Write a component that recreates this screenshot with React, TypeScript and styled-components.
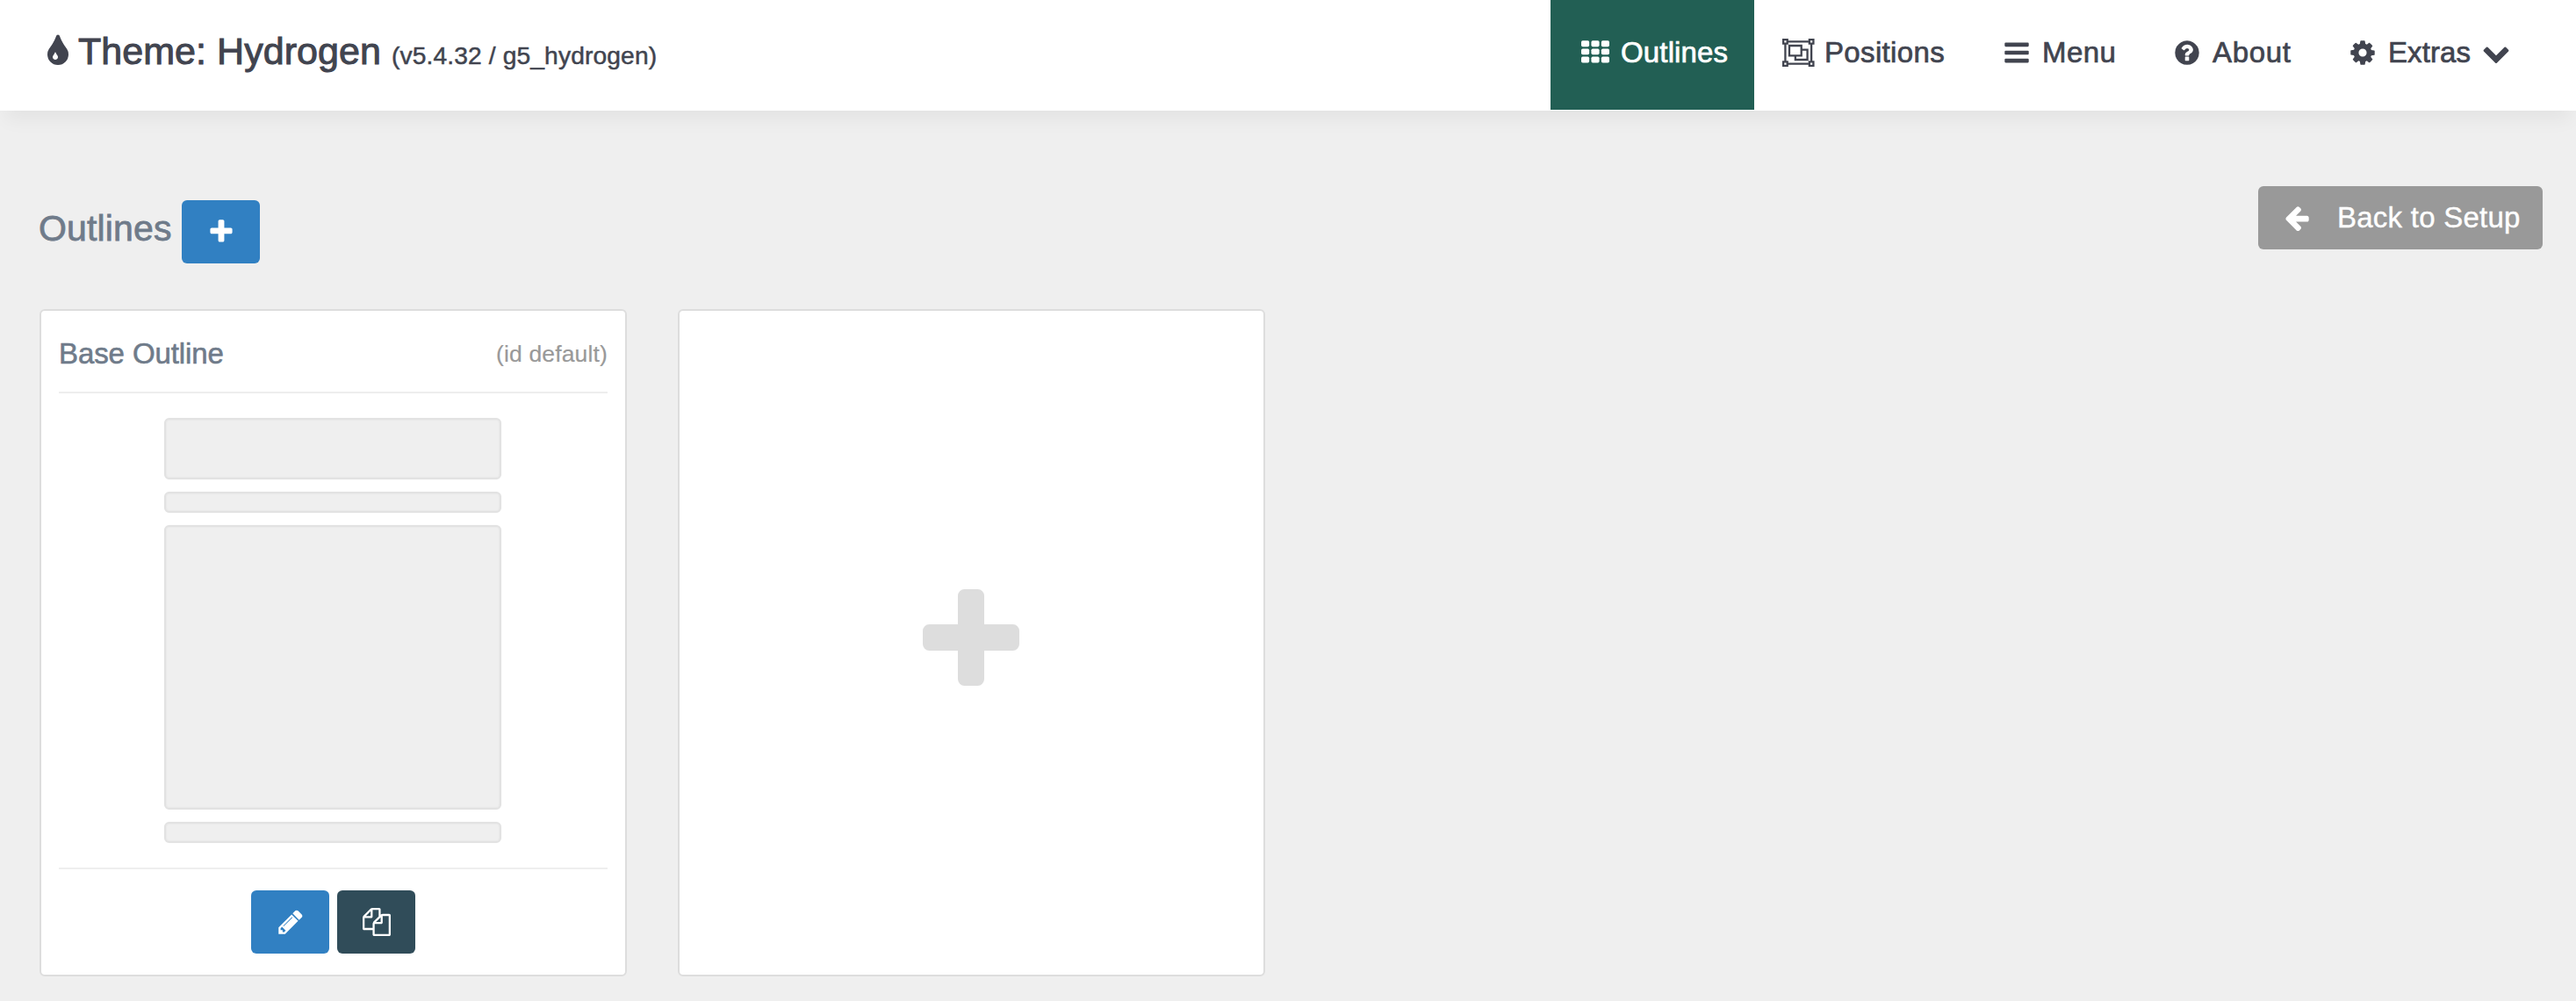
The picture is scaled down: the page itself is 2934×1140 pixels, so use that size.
import React from 'react';
import styled, { createGlobalStyle } from 'styled-components';

const GlobalStyle = createGlobalStyle`
  *, *::before, *::after { box-sizing: border-box; }
  body {
    margin: 0;
    background: #efefef;
    color: #41444f;
    font-family: "Liberation Sans", Arial, sans-serif;
  }
  h1, h2, h3 { margin: 0; font-weight: 400; }
`;

/* ---------- icons ---------- */

const Glyph = styled.svg<{ $size: number; $width?: number }>`
  display: block;
  flex: none;
  height: ${(p) => p.$size}px;
  width: ${(p) => p.$width ?? p.$size}px;
  fill: currentColor;
`;

const PATHS = {
  tint: 'M896 1152q0-36-20-69-1-1-15.5-22.5t-25.5-38-25-44-21-50.5q-4-16-21-16t-21 16q-7 23-21 50.5t-25 44-25.5 38-15.5 22.5q-20 33-20 69 0 53 37.5 90.5t90.5 37.5 90.5-37.5 37.5-90.5zm512-128q0 212-150 362t-362 150-362-150-150-362q0-145 81-275 6-9 62.5-90.5t101-151 99.5-178 83-201.5q9-30 34-47t51-17 51.5 17 33.5 47q28 93 83 201.5t99.5 178 101 151 62.5 90.5q81 127 81 275z',
  group:
    'M2048 384h-128v1024h128v384h-384v-128h-1280v128h-384v-384h128v-1024h-128v-384h384v128h1280v-128h384v384zm-256-256v128h128v-128h-128zm-1664 0v128h128v-128h-128zm128 1536v-128h-128v128h128zm1408-128v-128h128v-1024h-128v-128h-1280v128h-128v1024h128v128h1280zm256 128v-128h-128v128h128zM1280 640h384v768h-896v-256h-384v-768h896v256zm-768 384h640v-512h-640v512zm1024 256v-512h-256v384h-384v128h640z',
  question:
    'M1024 1376v-192q0-14-9-23t-23-9h-192q-14 0-23 9t-9 23v192q0 14 9 23t23 9h192q14 0 23-9t9-23zm256-672q0-88-55.5-163t-138.5-116-170-41q-243 0-371 213-15 24 8 42l132 100q7 6 19 6 16 0 25-12 53-68 86-92 34-24 86-24 48 0 85.5 26t37.5 59q0 38-20 61t-68 45q-63 28-115.5 86.5t-52.5 125.5v36q0 14 9 23t23 9h192q14 0 23-9t9-23q0-19 21.5-49.5t54.5-49.5q32-18 49-28.5t46-35 44.5-48 28-60.5 12.5-81zm384 192q0 209-103 385.5t-279.5 279.5-385.5 103-385.5-103-279.5-279.5-103-385.5 103-385.5 279.5-279.5 385.5-103 385.5 103 279.5 279.5 103 385.5z',
  cog: 'M1152 896q0-106-75-181t-181-75-181 75-75 181 75 181 181 75 181-75 75-181zm512-109v222q0 12-8 23t-20 13l-185 28q-19 54-39 91 35 50 107 138 10 12 10 25t-9 23q-27 37-99 108t-94 71q-12 0-26-9l-138-108q-44 23-91 38-16 136-29 186-7 28-36 28h-222q-14 0-24.5-8.5t-11.5-21.5l-28-184q-49-16-90-37l-141 107q-10 9-25 9-14 0-25-11-126-114-165-168-7-10-7-23 0-12 8-23 15-21 51-66.5t54-70.5q-27-50-41-99l-183-27q-13-2-21-12.5t-8-23.5v-222q0-12 8-23t19-13l186-28q14-46 39-92-40-57-107-138-10-12-10-24 0-10 9-23 26-36 98.5-107.5t94.5-71.5q13 0 26 10l138 107q44-23 91-38 16-136 29-186 7-28 36-28h222q14 0 24.5 8.5t11.5 21.5l28 184q49 16 90 37l142-107q9-9 24-9 13 0 25 10 129 119 165 170 7 8 7 22 0 12-8 23-15 21-51 66.5t-54 70.5q26 50 41 98l183 28q13 2 21 12.5t8 23.5z',
  chevron:
    'M1683 808l-742 741q-19 19-45 19t-45-19l-742-741q-19-19-19-45.5t19-45.5l166-165q19-19 45-19t45 19l531 531 531-531q19-19 45-19t45 19l166 165q19 19 19 45.5t-19 45.5z',
  plus: 'M1600 736v192q0 40-28 68t-68 28h-416v416q0 40-28 68t-68 28h-192q-40 0-68-28t-28-68v-416h-416q-40 0-68-28t-28-68v-192q0-40 28-68t68-28h416v-416q0-40 28-68t68-28h192q40 0 68 28t28 68v416h416q40 0 68 28t28 68z',
  arrow:
    'M1664 896v128q0 53-32.5 90.5t-84.5 37.5h-704l293 294q38 36 38 90t-38 90l-75 76q-37 37-90 37-52 0-91-37l-651-652q-37-37-37-90 0-52 37-91l651-650q38-38 91-38 52 0 90 38l75 74q38 38 38 91t-38 91l-293 293h704q52 0 84.5 37.5t32.5 90.5z',
  pencil:
    'M491 1536l91-91-235-235-91 91v107h128v128h107zm523-928q0-22-22-22-10 0-17 7l-542 542q-7 7-7 17 0 22 22 22 10 0 17-7l542-542q7-7 7-17zm-54-192l416 416-832 832h-416v-416zm683 96q0 53-37 90l-166 166-416-416 166-165q36-38 90-38 53 0 91 38l235 234q37 39 37 91z',
  files:
    'M1696 384q40 0 68 28t28 68v1216q0 40-28 68t-68 28h-960q-40 0-68-28t-28-68v-288h-544q-40 0-68-28t-28-68v-672q0-40 20-88t48-76l408-408q28-28 76-48t88-20h416q40 0 68 28t28 68v328q68-40 128-40h416zm-544 213l-299 299h299v-299zm-640-384l-299 299h299v-299zm196 647l316-316v-416h-384v416q0 40-28 68t-68 28h-416v640h512v-256q0-40 20-88t48-76zm956 804v-1152h-384v416q0 40-28 68t-68 28h-416v640h896z',
};

type IconName = keyof typeof PATHS;

const Icon = ({ name, size = 32 }: { name: IconName; size?: number }) => {
  const units = name === 'group' ? 2048 : 1792;
  return (
    <Glyph $size={size} $width={(size * units) / 1792} viewBox={`0 0 ${units} 1792`} fillRule="evenodd" aria-hidden>
      <path d={PATHS[name]} />
    </Glyph>
  );
};

const GridIcon = () => (
  <Glyph $size={32} viewBox="0 0 1792 1792" aria-hidden>
    {[128, 640, 1152].map((y) =>
      [0, 640, 1280].map((x) => <rect key={`${x}-${y}`} x={x} y={y} width="512" height="384" rx="96" />),
    )}
  </Glyph>
);

const BarsIcon = () => (
  <Glyph $size={32} viewBox="0 0 1792 1792" aria-hidden>
    {[256, 768, 1280].map((y) => (
      <rect key={y} x="128" y={y} width="1536" height="256" rx="64" />
    ))}
  </Glyph>
);

/* ---------- header ---------- */

const Header = styled.header`
  display: flex;
  justify-content: space-between;
  height: 126px;
  background: #fff;
  box-shadow: 0 16px 20px -6px rgba(0, 0, 0, 0.05);
`;

const Brand = styled.div`
  display: flex;
  align-items: center;
  gap: 2px;
  padding: 0 0 8px 45px;
`;

const Title = styled.h1`
  padding-top: 3px;
  font-size: 43px;
  line-height: 50px;
  letter-spacing: 0.05px;
  white-space: nowrap;
  -webkit-text-stroke: 1px currentColor;
`;

const Version = styled.small`
  margin-left: 12px;
  font-size: 28.2px;
  letter-spacing: 0.13px;
  -webkit-text-stroke: 0.5px currentColor;
`;

const Nav = styled.nav`
  display: flex;
  height: 125px;
`;

const Tab = styled.a<{ $width: number; $active?: boolean }>`
  display: flex;
  align-items: center;
  width: ${(p) => p.$width}px;
  padding: 0 0 6px 30px;
  color: ${(p) => (p.$active ? '#fff' : 'inherit')};
  background: ${(p) => (p.$active ? '#225f54' : 'transparent')};
`;

const TabIcon = styled.span`
  display: flex;
  justify-content: center;
  width: 41px;
  margin-right: 9px;
`;

const TabLabel = styled.span<{ $tracking: number }>`
  font-size: 33px;
  line-height: 38px;
  letter-spacing: ${(p) => p.$tracking}px;
  white-space: nowrap;
  -webkit-text-stroke: 0.7px currentColor;
`;

const Caret = styled.span`
  margin-left: 13px;
`;

/* ---------- page ---------- */

const Page = styled.main`
  padding: 86px 38px 28px 45px;
`;

const Toolbar = styled.div`
  display: flex;
  justify-content: space-between;
  align-items: flex-start;
  height: 140px;
`;

const Heading = styled.div`
  display: flex;
  align-items: center;
  gap: 11px;
  padding-top: 16px;
`;

const HeadingText = styled.h2`
  width: 151px;
  padding-bottom: 8px;
  margin-left: -1px;
  margin-right: 1px;
  color: #6f7b8a;
  font-size: 41px;
  line-height: 48px;
  letter-spacing: 0.15px;
  white-space: nowrap;
  -webkit-text-stroke: 0.8px currentColor;
`;

const Button = styled.button<{ $color: string; $width?: number }>`
  display: flex;
  align-items: center;
  justify-content: center;
  width: ${(p) => p.$width ?? 89}px;
  height: 72px;
  padding: 0;
  border: 0;
  border-radius: 6px;
  background: ${(p) => p.$color};
  color: #fff;
  font-family: inherit;
`;

const BackButton = styled(Button)`
  justify-content: flex-start;
  gap: 30px;
  padding-left: 28px;
  font-size: 33px;
  line-height: 38px;
  letter-spacing: 0.25px;
  white-space: nowrap;
  -webkit-text-stroke: 0.4px currentColor;
`;

const Cards = styled.div`
  display: grid;
  grid-template-columns: 669px 669px;
  gap: 58px;
`;

const Card = styled.section`
  display: flex;
  flex-direction: column;
  height: 760px;
  padding: 0 20px;
  border: 2px solid #ddd;
  border-radius: 6px;
  background: #fff;
`;

const NewCard = styled(Card)`
  align-items: center;
  justify-content: center;
  padding: 0 22px 2px 20px;
  color: #ddd;
`;

const CardHeader = styled.header`
  display: flex;
  justify-content: space-between;
  align-items: center;
  height: 94px;
  border-bottom: 2px solid #eee;
`;

const CardTitle = styled.h3`
  padding-top: 6px;
  color: #6f7b8a;
  font-size: 33px;
  line-height: 38px;
  letter-spacing: -0.1px;
  -webkit-text-stroke: 0.6px currentColor;
`;

const CardId = styled.span`
  padding-top: 6px;
  color: #999;
  font-size: 26.5px;
  line-height: 38px;
  letter-spacing: 0.15px;
  -webkit-text-stroke: 0.2px currentColor;
`;

const Wireframe = styled.div`
  display: flex;
  flex-direction: column;
  gap: 14px;
  width: 384px;
  margin: 28px 0 28px 120px;
`;

const Block = styled.div<{ $height: number }>`
  height: ${(p) => p.$height}px;
  border: 2px solid #e2e2e2;
  border-radius: 6px;
  background: #efefef;
  box-shadow: inset 0 0 1px 1px #e9e9e9, 0 0 1px #e9e9e9;
`;

const CardActions = styled.footer`
  display: flex;
  justify-content: center;
  gap: 9px;
  padding-top: 24px;
  border-top: 2px solid #eee;
`;

const BLOCKS = [70, 24, 324, 24];

const TABS = [
  { label: 'Outlines', width: 232, tracking: 0.15, icon: <GridIcon />, active: true },
  { label: 'Positions', width: 248, tracking: 0.35, icon: <Icon name="group" /> },
  { label: 'Menu', width: 194, tracking: 0.4, icon: <BarsIcon /> },
  { label: 'About', width: 200, tracking: 0.7, icon: <Icon name="question" /> },
  { label: 'Extras', width: 294, tracking: 0.1, icon: <Icon name="cog" />, menu: true },
];

export default function App() {
  return (
    <>
      <GlobalStyle />
      <Header>
        <Brand>
          <Icon name="tint" size={42} />
          <Title>
            Theme: Hydrogen
            <Version>(v5.4.32 / g5_hydrogen)</Version>
          </Title>
        </Brand>
        <Nav>
          {TABS.map((tab) => (
            <Tab key={tab.label} $width={tab.width} $active={tab.active}>
              <TabIcon>{tab.icon}</TabIcon>
              <TabLabel $tracking={tab.tracking}>{tab.label}</TabLabel>
              {tab.menu && (
                <Caret>
                  <Icon name="chevron" />
                </Caret>
              )}
            </Tab>
          ))}
        </Nav>
      </Header>
      <Page>
        <Toolbar>
          <Heading>
            <HeadingText>Outlines</HeadingText>
            <Button $color="#3180c2" aria-label="New outline">
              <Icon name="plus" />
            </Button>
          </Heading>
          <BackButton $color="#999" $width={324}>
            <Icon name="arrow" />
            Back to Setup
          </BackButton>
        </Toolbar>
        <Cards>
          <Card>
            <CardHeader>
              <CardTitle>Base Outline</CardTitle>
              <CardId>(id default)</CardId>
            </CardHeader>
            <Wireframe>
              {BLOCKS.map((height, i) => (
                <Block key={i} $height={height} />
              ))}
            </Wireframe>
            <CardActions>
              <Button $color="#3180c2" aria-label="Edit">
                <Icon name="pencil" />
              </Button>
              <Button $color="#304c59" aria-label="Duplicate">
                <Icon name="files" />
              </Button>
            </CardActions>
          </Card>
          <NewCard>
            <Icon name="plus" size={140} />
          </NewCard>
        </Cards>
      </Page>
    </>
  );
}
